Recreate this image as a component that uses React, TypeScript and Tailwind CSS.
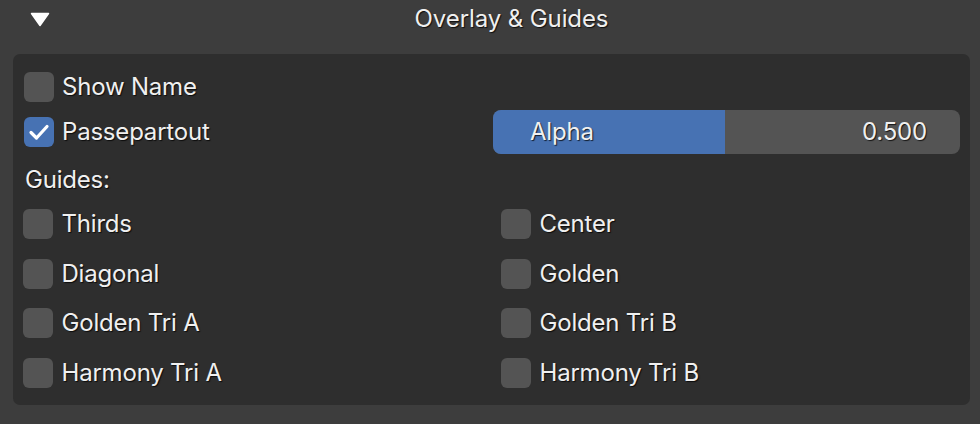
import React from "react";

const shadow = "[text-shadow:1px_1px_1px_rgba(0,0,0,0.75)]";

function Check({ checked = false }: { checked?: boolean }) {
  return (
    <div
      className={
        "w-[30px] h-[30px] rounded-[6px] shrink-0 flex items-center justify-center " +
        (checked ? "bg-[#4772b3]" : "bg-[#545454]")
      }
    >
      {checked && (
        <svg width="22" height="18" viewBox="0 0 22 18" fill="none">
          <path
            d="M3 9.5 L8.5 15 L19 3.5"
            stroke="white"
            strokeWidth="3.2"
            strokeLinecap="round"
            strokeLinejoin="round"
          />
        </svg>
      )}
    </div>
  );
}

function Item({ label, checked = false }: { label: string; checked?: boolean }) {
  return (
    <div className="flex items-center h-[30px] gap-[8.5px]">
      <Check checked={checked} />
      <span className={"text-[24px] leading-none tracking-[-0.2px] text-[#f0f0f0] " + shadow}>{label}</span>
    </div>
  );
}

export default function App() {
  return (
    <div
      className="w-[980px] h-[424px] bg-[#3d3d3d] overflow-hidden"
      style={{ fontFamily: "Inter, 'Noto Sans', sans-serif" }}
    >
      <div className="relative h-[38px] flex items-center pl-[43px]">
        <svg className="absolute left-[30px] top-[12px]" width="20" height="15" viewBox="0 0 20 15">
          <path d="M1.5 1.5 H18.5 L10 13.5 Z" fill="white" stroke="white" strokeWidth="1.5" strokeLinejoin="round" />
        </svg>
        <div className={"flex-1 text-center text-[24px] leading-none tracking-[-0.1px] text-[#f0f0f0] " + shadow}>
          Overlay &amp; Guides
        </div>
      </div>
      <div className="mx-[13px] mt-[16px] mr-[10px] h-[351px] bg-[#2e2e2e] rounded-[7px] pt-[18px] pl-[10px] pr-[10px] flex flex-col">
        <div className="pl-[0.5px]">
          <Item label="Show Name" />
        </div>
        <div className="mt-[8px] h-[44px] flex items-center">
          <div className="w-[470px] pl-[0.5px]">
            <Item label="Passepartout" checked />
          </div>
          <div className="flex-1 h-[44px] rounded-[8px] bg-[#545454] flex relative overflow-hidden">
            <div className="w-[232px] h-full bg-[#4772b3]" />
            <div className="absolute inset-0 flex items-center justify-between pl-[37px] pr-[33px]">
              <span className={"text-[24px] leading-none tracking-[-0.2px] text-[#f0f0f0] " + shadow}>Alpha</span>
              <span className={"text-[24px] leading-none tracking-[-0.2px] text-[#f0f0f0] " + shadow}>0.500</span>
            </div>
          </div>
        </div>
        <div className="mt-[11px] h-[30px] flex items-center pl-[2px]">
          <span className={"text-[24px] leading-none tracking-[-0.2px] text-[#f0f0f0] " + shadow}>Guides:</span>
        </div>
        <div className="mt-[14px] grid grid-cols-[478px_1fr] gap-y-[19.5px]">
          <Item label="Thirds" />
          <Item label="Center" />
          <Item label="Diagonal" />
          <Item label="Golden" />
          <Item label="Golden Tri A" />
          <Item label="Golden Tri B" />
          <Item label="Harmony Tri A" />
          <Item label="Harmony Tri B" />
        </div>
      </div>
    </div>
  );
}
